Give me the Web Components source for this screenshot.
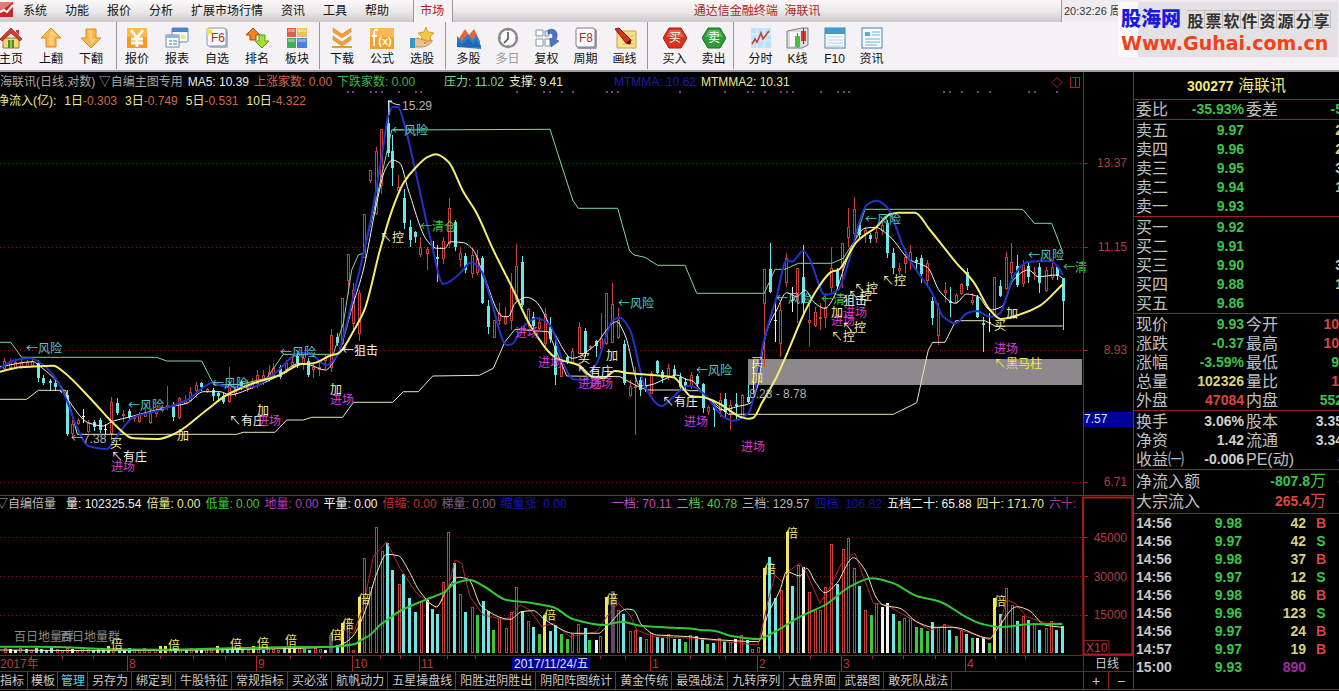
<!DOCTYPE html>
<html lang="zh-CN">
<head>
<meta charset="utf-8">
<title>通达信金融终端 海联讯</title>
<style>
html,body{margin:0;background:#000;font:12px/16px "Liberation Sans","Noto Sans CJK SC",sans-serif}
</style>
</head>
<body>
<trade-terminal></trade-terminal>
<script>
const BASE = `*{box-sizing:border-box}button{font:inherit;color:inherit;background:none;border:0;padding:0;margin:0;white-space:nowrap;cursor:default}`;
function define(name, html, setup){
  const t = document.createElement('template');
  customElements.define(name, class extends HTMLElement{
    connectedCallback(){
      if(this.shadowRoot) return;
      t.innerHTML = `<style>${BASE}</style>` + (typeof html === 'function' ? html(this) : html);
      this.attachShadow({mode:'open'}).append(t.content.cloneNode(true));
      if(setup) setup(this.shadowRoot, this);
    }
  });
}

/* ---------- toolbar icons, 24 x 22 ---------- */
const ICONS = {
home:`<path d="M4 11h16v10H4z" fill="#f7d873" stroke="#9a7a2a"/><path d="M12 1L1 12l2 2 9-8 9 8 2-2z" fill="#d63a2a" stroke="#8c1a12" stroke-width=".7"/><path d="M17 3h3v5l-3-3z" fill="#c33"/><rect x="9" y="13" width="6" height="8" fill="#4a8c2a"/><path d="M12 13v8" stroke="#cf8"/>`,
up:`<path d="M12 1L22 11h-5v9H7v-9H2z" fill="#fdb64c" stroke="#d88a24"/><path d="M12 3l6 6h-3v9H10V9" fill="#ffd68c" opacity=".7"/>`,
down:`<path d="M12 21L2 11h5V2h10v9h5z" fill="#fdb64c" stroke="#d88a24"/><path d="M9 3h4v9h4l-5 6" fill="#ffd68c" opacity=".7"/>`,
yen:`<rect x="2" y="1" width="20" height="20" fill="#f59a22"/><rect x="2" y="1" width="20" height="9" fill="#ffb84a"/><path d="M6 3l6 8 6-8M12 11v9M6 12h12M6 16h12" fill="none" stroke="#fff" stroke-width="2.8"/>`,
sheet:`<rect x="7" y="1" width="16" height="14" rx="1" fill="#f4f9ff" stroke="#6a8ab8"/><path d="M7 1h16v4H7z" fill="#4b82cc"/><rect x="1" y="8" width="13" height="12" fill="#fff" stroke="#7a8aa0"/><path d="M1 8h13v3H1z" fill="#8fb4de"/><path d="M16 8h4v4h-4z" fill="#f6e27a"/><path d="M4 14h3m1 0h4M4 17h3m1 0h4" stroke="#7aa6d6" stroke-width="1.5"/>`,
f6:`<rect x="4" y="2" width="19" height="19" rx="2" fill="#a9b8cc"/><rect x="2" y="1" width="19" height="18" rx="2" fill="#f6faff" stroke="#7d98bc"/><path d="M1 1l5 2 2-3-1 5 3 2H5L2 9V5z" fill="#ffe23a"/><text x="13" y="15" font-size="12" text-anchor="middle" fill="#c22">F6</text>`,
rank:`<path d="M8 1l7 7h-4v5H5V8H1z" fill="#f2831f" stroke="#a84c10"/><path d="M17 21l-7-7h4V8h6v6h4z" fill="#a4e030" stroke="#5a9a18"/>`,
blocks:`<path d="M2 1h9v9H2z" fill="#e8584a"/><path d="M12 1h10v9H12z" fill="#eec25a"/><path d="M2 11h9v10H2z" fill="#3fae58"/><path d="M12 11h10v10H12z" fill="#4d7fdc"/><path d="M3 2h7v3H3zM13 2h8v3h-8zM3 12h7v3H3zM13 12h8v3h-8z" fill="#fff" opacity=".35"/>`,
dl:`<path d="M3 1l9 6 9-6v4l-9 6-9-6zM3 9l9 6 9-6v4l-9 6-9-6z" fill="#eda234" stroke="#d18418" stroke-width=".5"/><path d="M2 19h20v2H2z" fill="#e39a38"/>`,
fx:`<rect x="0" y="1" width="24" height="21" fill="#f5a02c"/><rect x="0" y="1" width="24" height="9" fill="#fbb750"/><path d="M8 3c-3-1-4 1-4 3v13M2 9h5" fill="none" stroke="#fff" stroke-width="1.8"/><text x="15" y="18" font-size="11" font-weight="bold" text-anchor="middle" fill="#fff">(x)</text>`,
pick:`<path d="M16 0l2 5 6 1-4 4 1 5-5-2-5 2 1-5-4-4 6-1z" fill="#f7c83c" stroke="#b98a1c" stroke-width=".7"/><path d="M4 13c4-4 7 0 10 0 3 0 3 3 0 3 4-1 6-3 8-3 1 2-5 7-10 7H4z" fill="#f2c08a" stroke="#b07a3c" stroke-width=".8"/><path d="M0 11h5v10H0z" fill="#2e9bc0"/>`,
peaks:`<path d="M1 13L8 2l4 6 5-6 6 12v6H1z" fill="#f0642c"/><path d="M0 20V9l5 5 6-7 5 6 3-6 5 12v3z" fill="#2f7fd0"/><path d="M0 20v-6l5 3 6-6 5 6 3-4 5 7z" fill="#155aa8" opacity=".6"/>`,
clock:`<circle cx="12" cy="11" r="9" fill="#fafafa" stroke="#8a8a8a" stroke-width="2.4"/><path d="M12 5v7l-4 4" fill="none" stroke="#444" stroke-width="1.5"/><path d="M12 3v1M12 18v1M4 11h1M19 11h1" stroke="#555"/>`,
adj:`<path d="M1 3h7v6H1zM1 12h7v7H1zM10 12h5v7h-5z" fill="#fff" stroke="#7f95ae"/><path d="M10 4h4v5h-4z" fill="#d9e6f4" stroke="#7f95ae"/><path d="M13 3c8-3 11 4 8 10l3 1-8 6-1-9 2 1c2-4 0-7-4-5z" fill="#4b74c8" stroke="#2c4d96" stroke-width=".6"/>`,
f8:`<rect x="3" y="2" width="20" height="20" rx="2" fill="#9a9aa8"/><rect x="2" y="1" width="19" height="19" rx="2" fill="#fcfcff" stroke="#777d90"/><text x="12" y="15" font-size="12" text-anchor="middle" fill="#c22">F8</text>`,
draw:`<path d="M4 4h19v17H4z" fill="#fbe28a" stroke="#c9a040"/><path d="M9 9h12M9 13h12M9 17h12" stroke="#d8b858"/><path d="M2 2l4-1 12 12-1 4-4-1z" fill="#d8321e" stroke="#7e160c"/><path d="M17 17l-4-1 4-3z" fill="#222"/>`,
buy:`<path d="M6 1h12l6 10-6 10H6L0 11z" fill="#d8321e" stroke="#a81c10"/><path d="M7 3h10l4 7H3z" fill="#f0705a" opacity=".7"/><text x="12" y="15" font-size="12" text-anchor="middle" fill="#fff">买</text>`,
sell:`<path d="M6 1h12l6 10-6 10H6L0 11z" fill="#2f9a38" stroke="#1a6e22"/><path d="M7 3h10l4 7H3z" fill="#6cc46c" opacity=".7"/><text x="12" y="15" font-size="12" text-anchor="middle" fill="#fff">卖</text>`,
tick:`<rect x="2" y="1" width="20" height="20" fill="#bfe2f8"/><path d="M2 7h20M2 13h20M8 1v20M15 1v20" stroke="#e4f4ff"/><path d="M3 17l3-5 2 3 4-9 2 6 3-4 3-4" fill="none" stroke="#c83c3c" stroke-width="1.6"/>`,
kline:`<path d="M1 4l15-3h6v17l-6 3H1z" fill="#dcdce2" stroke="#7c7c88"/><path d="M4 5h10v14H4z" fill="#fff"/><path d="M11.500 6v15" stroke="#2a8a2a"/><path d="M9 9h5v11H9z" fill="#4cc03c"/><path d="M15 4h5v10h-5z" fill="#e03838"/><path d="M17.500 1v16" stroke="#a02020"/>`,
f10:`<rect x="2" y="1" width="20" height="20" fill="#fff" stroke="#3b84b4"/><path d="M2 1h20v6H2z" fill="#3f9ccc"/><path d="M4 10h16M4 13h16M4 16h16M4 19h16" stroke="#a6cfe4"/>`,
news:`<rect x="2" y="1" width="20" height="20" fill="#f7fcff" stroke="#3b84b4"/><path d="M5 5h5v4H5z" fill="#5fa9d4"/><path d="M12 5h8M12 8h8M5 12h15M5 15h15M5 18h12" stroke="#6cb0d8"/>`};

define('tool-button', el=>`<style>
:host{display:block;flex:none;width:var(--tool-w,40px)}
button{display:flex;flex-direction:column;align-items:center;gap:2px;width:100%;padding-top:5px;color:#111}
:host([off]) button{color:#999}
svg{display:block;width:24px;height:22px}
</style><button type="button"><svg viewBox="0 0 24 22" font-family="Liberation Sans,Noto Sans CJK SC,sans-serif">${ICONS[el.getAttribute('icon')]}</svg><slot></slot></button>`);

define('menu-bar', `<style>
:host{display:flex;align-items:stretch;height:22px;overflow:hidden;color:#111;background:linear-gradient(#fbf9f9,#e9e7e7 55%,#cbc9ca)}
svg{width:14px;height:18px;flex:none}
nav{display:flex;gap:18px;padding:0 24px 0 9px}
.on{padding:0 8px 0 6px;border:solid #999;border-width:0 1px;background:#f5f3f3;color:#b82020}
h1{margin:0 auto;font:inherit;line-height:22px;color:#b02222;white-space:pre}
time{flex:0 0 278px;border-left:1px solid #999;padding-left:2px;font-size:11px;line-height:22px;background:#efedef;color:#333}
</style>
<svg viewBox="0 0 14 18"><path d="M0 2h13v15H0z" fill="#c8262a"/><path d="M0 2h13L0 12z" fill="#e87878"/><path d="M0 12l4-2 3 2 6-7" stroke="#fff" stroke-width="2" fill="none"/></svg>
<nav><button>系统</button><button>功能</button><button>报价</button><button>分析</button><button>扩展市场行情</button><button>资讯</button><button>工具</button><button>帮助</button></nav>
<button class="on">市场</button><h1>通达信金融终端  海联讯</h1><time>20:32:26 周</time>`);

define('tool-bar', `<style>
:host{display:flex;height:50px;overflow:hidden;background:#f5f2f5;border-bottom:2px solid #9c9a9c;padding-bottom:1px}
div{display:flex;flex:none}
div+div{border-left:1px solid #9a989a;background:none}
.a{margin-left:-9px;padding-right:5px}.b{padding-right:2px}.c{padding:0 3px 0 2px}
.d{--tool-w:39px;padding:0 3px}.e{--tool-w:39px;padding-left:7px}.f{--tool-w:37px;padding-left:8px}
</style>
<div class="a"><tool-button icon="home">主页</tool-button><tool-button icon="up">上翻</tool-button><tool-button icon="down">下翻</tool-button></div>
<div class="b"><tool-button icon="yen">报价</tool-button><tool-button icon="sheet">报表</tool-button><tool-button icon="f6">自选</tool-button><tool-button icon="rank">排名</tool-button><tool-button icon="blocks">板块</tool-button></div>
<div class="c"><tool-button icon="dl">下载</tool-button><tool-button icon="fx">公式</tool-button><tool-button icon="pick">选股</tool-button></div>
<div class="d"><tool-button icon="peaks">多股</tool-button><tool-button icon="clock" off>多日</tool-button><tool-button icon="adj">复权</tool-button><tool-button icon="f8">周期</tool-button><tool-button icon="draw">画线</tool-button></div>
<div class="e"><tool-button icon="buy">买入</tool-button><tool-button icon="sell">卖出</tool-button></div>
<div class="f"><tool-button icon="tick">分时</tool-button><tool-button icon="kline">K线</tool-button><tool-button icon="f10">F10</tool-button><tool-button icon="news">资讯</tool-button></div>`);

define('brand-badge', `<style>
:host{display:block;width:220px;height:55px;padding:5px 0 0 3px;background:linear-gradient(90deg,#fbf9fb 20px,#e3e1e3 20px);overflow:hidden;white-space:nowrap}
.t{display:flex;align-items:center;gap:6px;height:24px}
b{font-size:20px;line-height:24px;color:#1a1ae0;font-weight:900}
.g{display:flex;color:#333;font:bold 16px/18px "Noto Sans CJK SC",sans-serif}
.g i{font-style:normal;width:18px;height:18px;text-align:center;border:1px solid #c4beb6;border-left-width:0}
a{display:block;font:bold 19px/24px "DejaVu Sans",sans-serif;color:#f2421a;text-decoration:none}
</style><div class="t"><b>股海网</b><span class="g"><i>股</i><i>票</i><i>软</i><i>件</i><i>资</i><i>源</i><i>分</i><i>享</i></span></div><a href="#">Www.Guhai.com.cn</a>`);

define('legend-row', `<style>
:host{display:flex;gap:5px;height:19px;line-height:19px;overflow:hidden;white-space:pre}
::slotted(span){flex:none}
</style><slot></slot>`);

/* ---------- chart data ----------
   Points are kept per tile, in thirds of a pixel from the tile's origin. */
const TILE={A:[0,330],B:[330,90],C:[690,180],P:[0,490],Q:[340,490],R:[700,490]};
const px=(t,x,y)=>[TILE[t][0]+x/3,TILE[t][1]+y/3];
const pts=parts=>Object.entries(parts).flatMap(([t,s])=>s.trim().split(/\s+/).map(p=>px(t,...p.split(',').map(Number))));
const line=(color,w,parts)=>`<polyline points="${pts(parts).map(p=>p.map(v=>v.toFixed(1)).join()).join(' ')}" fill="none" stroke="${color}" stroke-width="${w}" stroke-linejoin="round"/>`;
/* monotone cubic through the points, so an average never overshoots its own data */
function curve(color,w,parts){
  const P=pts(parts),n=P.length,d=[],m=[];
  for(let i=0;i<n-1;i++) d.push((P[i+1][1]-P[i][1])/Math.max(.1,P[i+1][0]-P[i][0]));
  m[0]=d[0];m[n-1]=d[n-2];
  for(let i=1;i<n-1;i++) m[i]=d[i-1]*d[i]<=0?0:2*d[i-1]*d[i]/(d[i-1]+d[i]);
  let s=`M${P[0].map(v=>v.toFixed(1))}`;
  for(let i=0;i<n-1;i++){const h=(P[i+1][0]-P[i][0])/3;s+=`C${[P[i][0]+h,P[i][1]+m[i]*h,P[i+1][0]-h,P[i+1][1]-m[i+1]*h,...P[i+1]].map(v=>v.toFixed(1))}`}
  return `<path d="${s}" fill="none" stroke="${color}" stroke-width="${w}"/>`;
}
const COL={r:'#c8403c',c:'#6ee6e6',w:'#f4f4ee',g:'#3cc83c',y:'#f4e65a',p:'#5c4a64'};
/* colour, x, high, body top, body bottom, low */
const CANDLES={
A:`r12,85,92,115,122 r30,88,95,112,120 r46,88,95,110,118 r62,90,96,108,116 r80,90,96,108,114 r97,88,94,106,112 c115,90,98,145,155 c130,135,145,160,165 c149,148,152,160,182 c166,150,158,172,182 c182,178,182,186,190 c200,180,195,312,318 r215,270,282,308,325 r233,265,270,280,285 w250,237,258,262,280 r265,270,278,302,308 c283,270,275,290,302 c301,265,270,300,308 w316,282,296,300,312 r334,200,215,308,330 c350,205,220,250,255 r368,240,252,256,275 c386,238,243,262,272 r402,255,260,265,275 r418,245,252,272,280 r435,235,245,258,262 r451,240,250,275,282 r468,235,242,250,260 r486,225,232,240,245 r502,168,225,232,240 c520,215,230,262,272 r536,200,205,262,268 r554,195,210,218,222 r571,170,185,210,215 r588,155,165,180,205 c604,155,160,172,182 r620,175,178,182,188 c638,175,180,198,212 c655,185,190,198,215 c670,190,197,215,222 r688,112,165,212,220 r705,170,178,190,200 c722,150,155,172,180 r740,150,158,175,185 r756,145,155,170,178 r772,120,135,160,175 r790,120,135,150,165 r806,105,125,140,155 r820,100,115,135,145 c840,105,110,140,148 r858,90,100,118,130 r875,85,95,105,115 c892,70,78,98,115 r910,75,85,100,120 c925,85,92,135,142 r940,100,112,116,145 r958,90,112,116,138 r975,75,80,90,118`,
B:`r3,718,735,830,845 c20,730,742,758,768 r37,625,625,760,765 r53,492,492,570,615 r70,580,600,700,720 r86,600,610,730,752 r103,373,373,500,505 r121,240,240,270,280 r137,172,182,370,375 r154,118,118,285,312 c173,30,100,190,200 c187,135,183,235,288 r205,255,290,300,312 c221,298,323,400,418 c239,390,410,450,470 c256,422,427,440,460 r271,440,472,492,502 r290,470,478,490,540 w308,452,470,473,490 c322,465,500,506,575 r340,440,453,505,522 r356,325,353,460,475 c374,390,395,470,482 r391,470,488,508,530 c406,490,497,540,550 r425,475,495,550,565 r442,480,505,545,555 c457,498,505,638,642 c475,630,648,712,732 r491,690,690,740,742 r508,640,670,690,705 r526,650,678,698,705 r542,550,590,690,720 r559,462,528,628,635 c577,497,515,645,650 r593,655,658,700,710 c610,665,680,708,718 r628,680,695,715,720 r644,655,672,760,780 c661,680,710,748,760 c676,740,768,855,885 r694,810,820,858,862 c712,795,800,815,822 r727,775,783,815,822 r746,695,712,788,792 c764,715,723,790,800 r779,765,768,772,780 c797,750,753,768,800 r812,668,745,775,780 r829,608,608,760,765 r847,578,643,755,760 r863,655,690,740,748 c881,750,762,880,885 r899,870,888,915,922 r914,830,888,892,1035 c931,860,870,900,918 c946,865,888,895,905 r964,842,848,908,912 c982,810,812,848,852 c997,840,845,865,880 r1015,822,835,860,870 c1033,825,838,855,862 c1050,850,860,890,900 c1066,865,875,890,900`,
C:`r4,575,585,618,628 c20,582,588,612,620 c38,610,613,683,700 r53,675,680,693,705 c71,675,680,690,740 r89,640,660,690,710 c104,640,658,695,710 r121,660,675,700,750 c137,640,672,678,718 r155,642,645,708,712 c173,615,650,665,668 w190,540,560,563,640 r223,268,268,370,560 c239,188,268,335,340 w256,370,420,423,485 r271,370,390,488,530 r289,220,235,305,320 w306,320,360,363,395 r322,265,265,360,430 c340,195,290,370,405 r358,360,420,425,500 r374,380,395,435,440 r391,370,410,415,450 r406,340,380,410,445 r424,200,265,320,340 c442,265,270,318,325 r457,190,190,260,325 r475,85,140,170,200 r493,52,87,160,190 c508,130,135,165,175 r526,140,150,160,190 c541,160,165,178,188 r559,140,155,175,188 r577,120,135,150,165 c592,120,130,218,235 c610,205,218,265,282 r628,250,265,270,285 r645,205,230,250,280 r661,195,215,240,270 c679,230,240,245,270 c694,225,235,283,310 r712,240,250,300,320 c727,350,362,415,435 r745,370,385,465,495 r764,305,330,335,365 c779,320,362,370,410 r797,340,345,365,370 r814,310,312,340,345 c830,265,275,318,330 r847,340,360,365,375 c862,345,350,410,415 c880,410,430,436,515 w898,400,425,428,455 r913,290,292,405,412 c931,300,318,348,350 r949,215,230,325,330 r964,190,245,275,300 c982,225,258,315,322 r998,240,255,310,320 c1015,250,258,290,310 r1033,260,275,280,300 c1048,250,262,310,340 r1067,262,270,330,335 r1085,240,260,290,300 c1100,255,262,288,300 c1118,293,293,362,450`};
function candles(){
  let out='';
  for(const t in CANDLES) for(const s of CANDLES[t].split(' ')){
    const k=s[0],[x,hi,bt,bb,lo]=s.slice(1).split(',').map(Number),[ox,oy]=TILE[t];
    const X=Math.round(ox+x/3),Y=v=>Math.round(oy+v/3),h=Math.max(1,Y(bb)-Y(bt));
    if(k==='r') out+=`<path d="M${X+.5} ${Y(hi)}V${Y(bt)}M${X+.5} ${Y(bb)}V${Y(lo)}" stroke="${COL.r}"/><rect x="${X-.5}" y="${Y(bt)+.5}" width="2" height="${h}" fill="#000" stroke="${COL.r}"/>`;
    else out+=`<path d="M${X+.5} ${Y(hi)}V${Y(lo)}" stroke="${COL[k]}"/><rect x="${X-1}" y="${Y(bt)}" width="3" height="${h}" fill="${COL[k]}"/>`;
  }
  return out;
}
const VOLUME={
P:`p990,435 c1010,465 y1027,400 r1043,385 r1060,480 y1076,320 r1092,205 r1110,290 r1127,112 r1145,182 c1162,160 c1177,240 r1196,283`,
Q:`c190,253 c208,323 c226,367 r242,335 w260,330 c277,357 c292,372 r310,277 r325,127 c343,220 r361,312 c376,367 r396,352 g412,375 c428,333 c445,362 g460,420 r478,385 r497,415 r512,365 r529,290 c547,362 r563,393 c580,410 g598,433 y613,375 c631,423 c646,405 g664,432 g682,447 r697,433 r715,403 c734,413 g748,450 w767,450 r781,437 y799,320 p817,303 r833,360 c850,372 r869,423 r884,421 c901,440 r917,448 r934,430 c952,440 c967,445 r985,433 c1003,447 c1018,447 g1036,457 r1051,435 c1069,438`,
R:`c7,445 g22,462 c40,458 r58,445 c73,455 r91,455 w106,447 r124,435 c142,450 r157,478 r175,470 y193,235 c208,200 c226,323 r243,300 y260,125 c277,288 r293,225 w310,232 r328,305 r345,358 r361,360 r376,290 r394,163 c412,283 r428,178 r445,145 r463,233 c478,288 r496,360 g512,375 r529,340 w547,350 w562,338 c580,372 g598,392 r613,385 r631,385 g649,412 g664,415 g682,422 c697,395 r715,412 r733,403 c748,420 g767,437 r784,420 c799,432 g817,445 w832,443 w850,445 g868,460 y883,325 c901,372 r919,295 r935,345 c952,392 r969,378 c985,390 r1003,400 c1018,420 r1037,415 r1053,393 c1069,420 c1087,408`};
/* quiet period before the breakout: one letter per session */
const QUIET='rwwrcrccccrrrwrrrcccyrcwcrrrrryyrcrcrcwrrygcccgryrcrrrcyyrgcrrw';
function volumes(){
  let out='';
  const bar=(k,X,Y)=>out+=k==='r'?`<rect x="${X-.5}" y="${Y+.5}" width="2" height="${652-Y}" fill="#000" stroke="${COL.r}"/>`:`<rect x="${X-1}" y="${Y}" width="${k==='p'?4:3}" height="${653-Y}" fill="${COL[k]}"/>`;
  [...QUIET].forEach((k,i)=>bar(k,Math.round(5+i*5.16),k==='y'?646:649+(i*7)%3-1));
  for(const t in VOLUME) for(const s of VOLUME[t].split(' ')){const[x,y]=s.slice(1).split(',').map(Number),p=px(t,x,y);bar(s[0],Math.round(p[0]),Math.round(p[1]))}
  return out;
}
const grid=(ys)=>ys.map(y=>`<path d="M0 ${y}.5H1083" stroke="#8c1c1c" stroke-dasharray="1 3"/><path d="M1083 ${y}.5h5" stroke="#a02020"/>`).join('');
const arrows=s=>s.replace(/[←↖]/,a=>`<tspan font-family="Noto Sans CJK SC">${a}</tspan>`);
const label=(x,y,s,fill,a='start')=>`<text x="${x}" y="${y+4}" fill="${fill}" text-anchor="${a}">${arrows(s)}</text>`;
const marks=(color,list)=>list.map(([x,y,s])=>label(x,y,s,color)).join('');

define('price-pane', ()=>`<style>
:host{display:grid;border-bottom:0}
svg,.head{grid-area:1/1;min-width:0}
svg{display:block;width:100%;height:auto}
.head{position:relative;max-width:calc(100% - 84px);height:40px;padding-top:1px;overflow:hidden}
.gap{margin-left:24px}.wide{margin-left:46px}
.flow{gap:8px;margin-left:-3px}
</style>
<svg viewBox="0 72 1133 424" font-family="Liberation Sans,Noto Sans CJK SC,sans-serif" font-size="12">
${grid([163,247,350,482])}
<rect x="748" y="359" width="334" height="26" fill="#8c888c"/>
${[347,352,370,375,381,398,415,420,516,543,549,561,572,606,611,617,679,724,747,752,764,780,786,792,820,837,843,848,943,949,961,977,989,1028,1034,1056].map(x=>`<rect x="${x}" y="91" width="2" height="2" fill="#8a3a8a"/>`).join('')}
${candles()}
${line('#7fd8a0',1,{A:'0,37 32,37 65,82 470,82 500,93 605,93 642,165 720,163 800,145 850,73 990,73',B:'10,793 40,700 65,540 85,495 100,490 130,370 185,120 660,118 728,330 745,355 863,355 898,480 912,495 945,502 983,526 1065,526 1100,610',C:'20,340 223,340 255,268 285,268 325,250 425,250 460,235 495,180 525,88 998,88 1033,130 1085,130 1118,215'})}
${line('#e8e8c0',1,{A:'0,208 80,208 115,181 197,181 232,313 710,313 730,307 825,307 860,270 910,270 935,262',B:'38,982 70,937 188,937 220,905 265,905 308,858 448,856 490,835 525,755 555,718 655,725 710,858 870,860 915,885 950,900 1070,900',C:'0,632 28,632 115,703 610,703 680,668 715,510 728,487 765,487 797,422 885,422 915,438 1118,438'})}
${curve('#f4f4f4',1,{A:'0,110 100,95 115,105 180,165 205,210 265,278 310,288 335,275 400,258 500,232 560,220 610,185 660,185 690,195 740,180 830,140 900,100 930,105 975,120',B:'20,800 70,640 100,540 140,340 165,240 187,210 210,220 235,300 290,450 320,475 345,475 360,455 400,458 430,480 455,540 520,680 535,680 555,640 590,622 615,632 670,725 727,805 790,770 860,695 885,735 930,888 960,885 1010,865 1040,855 1075,870',C:'0,600 40,640 100,690 140,680 180,670 205,610 220,500 235,440 260,390 290,338 320,350 345,330 370,365 405,385 430,355 460,270 490,190 525,145 555,142 600,170 660,240 712,262 750,335 797,370 830,342 865,350 900,390 935,380 970,300 1015,270 1045,290 1100,285 1118,295'})}
${curve('#2234c8',2,{A:'0,115 40,92 90,85 130,105 170,150 200,210 230,290 265,348 320,357 350,320 400,262 480,240 560,210 640,158 680,172 760,170 830,125 900,68 930,72 980,105',B:'20,800 40,740 70,620 120,400 160,170 175,75 190,50 205,52 225,110 260,260 300,440 340,582 385,555 425,517 455,545 480,620 530,765 545,763 580,710 620,685 660,705 700,820 730,868 760,870 800,820 850,690 870,683 900,720 945,890 995,948 1030,920 1070,888',C:'0,617 40,640 100,710 130,722 175,700 200,610 220,490 260,350 290,240 305,245 340,213 360,240 405,345 445,330 470,265 510,120 530,75 560,62 590,80 640,200 665,250 727,340 760,410 797,430 830,400 860,393 900,410 930,400 970,290 1015,245 1080,243 1105,262 1118,285'})}
${curve('#f6ee6c',2,{A:'0,125 60,112 160,107 190,125 280,215 340,280 400,325 475,327 530,308 620,240 680,195 760,160 840,135 905,102 940,100',B:'0,797 25,790 75,715 105,655 150,480 190,350 220,280 255,235 295,200 318,193 355,215 400,305 440,370 490,480 550,600 600,705 680,805 745,825 790,862 820,865 855,843 900,850 1030,862 1070,908',C:'0,648 40,652 90,672 150,710 175,716 190,713 215,670 260,590 300,500 340,405 380,330 425,275 445,270 500,185 560,140 600,103 625,98 675,98 720,150 800,250 850,305 900,390 932,417 1000,400 1050,377 1118,313'})}
${marks('#58c8cc',[[26,349,'←风险'],[128,406,'←风险'],[212,384,'←风险'],[280,353,'←风险'],[392,131,'←风险'],[618,304,'←风险'],[696,371,'←风险'],[776,299,'←风险'],[865,220,'←风险'],[1028,256,'←风险']])}
${marks('#3cc83c',[[420,227,'←清仓'],[821,300,'←清']])}
<svg x="1063" y="258" width="19" height="20"><text x="0" y="14" fill="#3cc83c">${arrows('←清')}</text></svg>
${marks('#f2f2f2',[[342,351,'←狙击'],[843,301,'狙击'],[111,457,'↖有庄'],[229,421,'↖有庄'],[577,372,'↖有庄'],[662,402,'↖有庄']])}
${marks('#d83cd8',[[111,467,'进场'],[257,421,'进场'],[330,400,'进场'],[515,333,'进场'],[538,363,'进场'],[578,384,'进场'],[589,384,'进场'],[684,422,'进场'],[741,447,'进场'],[831,321,'进场'],[843,313,'进场'],[994,349,'进场']])}
${marks('#f4ecaa',[[110,444,'买'],[578,359,'买'],[994,326,'买'],[177,436,'加'],[257,411,'加'],[330,390,'加'],[606,356,'加'],[831,313,'加'],[1006,314,'加'],[380,238,'↖控'],[848,296,'↖控'],[854,289,'↖控'],[882,281,'↖控'],[842,328,'↖控'],[831,337,'↖控']])}
${marks('#f4ec3c',[[751,363,'买'],[751,378,'加'],[994,364,'↖黑马柱']])}
${marks('#b4b4b4',[[71,439,'←7.38'],[402,106,'15.29'],[749,394,'8.28 - 8.78']])}
<path d="M389 115v-14h3l-3 1M389 101l6 3 5 1" fill="none" stroke="#ddd"/>
<path d="M1083.5 72V496M0 495.5H1134" stroke="#a02020" fill="none"/>
<path d="M1052 82.5l5-5 5 5-5 5zM1070.5 77.5h9v10h-9zM1075.5 77.5v10" stroke="#a02828" fill="none"/>
${label(1127,163,'13.37','#b83c3c','end')}${label(1127,247,'11.15','#b83c3c','end')}${label(1127,350,'8.93','#b83c3c','end')}${label(1127,482,'6.71','#b83c3c','end')}
<rect x="1084" y="412" width="49" height="15" fill="#000096"/>${label(1084,419,'7.57','#e4e4f4')}
</svg>
<div class="head">
<legend-row><span style="color:#aaa">海联讯(日线.对数) ▽自编主图专用</span><span style="color:#eee">MA5: 10.39</span><span style="color:#d0684c">上涨家数: 0.00</span><span style="color:#3cb84c">下跌家数: 0.00</span><span class="gap" style="color:#7fd890">压力: 11.02</span><span style="color:#eeeed0">支撑: 9.41</span><span class="wide" style="color:#1c1cb4">MTMMA: 10.62</span><span style="color:#ecec94">MTMMA2: 10.31</span></legend-row>
<legend-row class="flow"><span style="color:#ecec94">净流入(亿):</span><span style="color:#ecec94">1日<font color="#d0684c">-0.303</font></span><span style="color:#ecec94">3日<font color="#d0684c">-0.749</font></span><span style="color:#ecec94">5日<font color="#d0684c">-0.531</font></span><span style="color:#ecec94">10日<font color="#d0684c">-4.322</font></span></legend-row>
</div>`);

define('volume-pane', ()=>`<style>
:host{display:grid}
svg,.head{grid-area:1/1;min-width:0}
svg{display:block;width:100%;height:auto}
.head{position:relative;max-width:calc(100% - 52px);height:18px;overflow:hidden}
.wide{margin-left:40px}
legend-row{height:17px;line-height:17px}
</style>
<svg viewBox="0 496 1133 176" font-family="Liberation Sans,Noto Sans CJK SC,sans-serif" font-size="12">
${grid([537,576,615])}
${label(14,637,'百日地量群','#8a8a8a')}${label(60,637,'百日地量群','#8a8a8a')}
${volumes()}
${line('#b82828',1,{P:'1030,420 1060,430 1090,350 1120,200 1160,155',Q:'180,235 230,310 290,355 325,290 345,210 365,220 390,320 430,375 500,390 540,345 570,360 605,410 640,400 690,440 770,425 800,380 835,340 870,375 890,420 940,440 1060,445',R:'175,465 205,330 225,255 245,275 270,240 300,220 320,250 360,340 390,290 430,210 465,190 490,260 520,340 560,345 630,385 690,420 740,405 870,450 900,400 920,330 945,340 980,380 1040,400 1087,400'})}
${curve('#f0e8b8',1,{P:'0,480 330,482 900,475 1000,470 1040,455 1065,430 1100,350 1130,250 1160,193',Q:'175,197 205,240 240,305 290,350 320,300 355,262 385,268 425,350 510,388 545,365 580,362 610,385 640,405 700,430 775,430 800,410 860,357 880,360 905,405 950,435 1050,440',R:'0,445 100,452 175,455 205,370 240,300 260,245 300,258 320,235 345,275 375,308 410,280 460,203 495,240 530,325 550,345 600,355 650,395 700,412 760,412 870,445 890,420 950,350 985,360 1035,405 1087,412'})}
${curve('#34c834',2,{P:'0,470 115,470 230,473 330,478 480,479 690,475 900,471 1000,470 1065,462 1080,452 1110,435 1140,405 1175,380',Q:'180,363 260,328 310,308 345,280 390,270 430,288 500,330 560,337 640,352 700,388 790,405 845,395 900,407 1000,413 1070,418',R:'0,420 40,422 90,437 175,447 230,422 300,380 380,342 450,290 515,265 580,280 650,318 720,335 800,382 850,403 900,411 990,403 1087,402'})}
${marks('#f2e86a',[[111,645],[168,646],[230,645],[257,644],[285,641],[330,636],[342,625],[358,600],[544,616],[606,600],[764,570],[786,534],[994,602]].map(([x,y])=>[x,y,'倍']))}
<path d="M1083 497.5h49.5v157h-49z" fill="none" stroke="#a81c1c" stroke-width="2"/>
<path d="M0 655.5H1134M0 671.5H1134M1083.5 655V672M1084 640.5h25v14" stroke="#8c1c1c" fill="none"/>
<path d="${[127,256,352,419,650,757,841,965].map(x=>`M${x}.5 656v15`).join('')}${[31,62,93,160,193,225,290,320,380,400,447,475,600,625,690,725,779,810,872,903,935,995,1025].map(x=>`M${x}.5 656v3`).join('')}" stroke="#a82828"/>
${marks('#b83c3c',[[0,664,'2017年'],[129,664,'8'],[258,664,'9'],[354,664,'10'],[421,664,'11'],[652,664,'1'],[759,664,'2'],[843,664,'3'],[967,664,'4'],[1086,648,'X10']])}
<rect x="512" y="657" width="78" height="13" fill="#00009a"/>${label(514,664,'2017/11/24/五','#e4e4f4')}
${label(1127,538,'45000','#b83c3c','end')}${label(1127,577,'30000','#b83c3c','end')}${label(1127,615,'15000','#b83c3c','end')}
${label(1095,664,'日线','#c8c8c8')}
</svg>
<div class="head"><legend-row><span style="color:#bbb;margin-left:-4px;margin-right:5px">▽自编倍量</span><span style="color:#eee">量: 102325.54</span><span style="color:#ecec94">倍量: 0.00</span><span style="color:#3cc83c">低量: 0.00</span><span style="color:#b43cb4">地量: 0.00</span><span style="color:#f4f4f4">平量: 0.00</span><span style="color:#c03030">倍缩: 0.00</span><span style="color:#7c6484">梯量: 0.00</span><span style="color:#1818b4">缩量涨: 0.00</span><span class="wide" style="color:#c84cc8">一档: 70.11</span><span style="color:#4cd04c">二档: 40.78</span><span style="color:#bbb">三档: 129.57</span><span style="color:#1414a0">四档: 106.82</span><span style="color:#f4f4f4">五档二十: 65.88</span><span style="color:#ecec94">四十: 171.70</span><span style="color:#a43ca4">六十:</span></legend-row></div>`);

define('template-tabs', `<style>
:host{display:flex;height:18px;border-bottom:1px solid #a02020;color:#c8c8c8;overflow:hidden}
nav{display:flex;flex:1;min-width:0;overflow:hidden}
nav button{flex:none;padding:0 3px 0 4px;border-right:1px solid #a02020}
nav .s{padding:0 2px 0 3px}nav .f{padding:0 3px 0 0}
nav .on{color:#4cd8e8}
div{display:flex;flex:0 0 50px;border-left:1px solid #a02020}
div button{flex:1;font-size:14px}div button+button{border-left:1px solid #a02020}
</style><nav><button class="f">指标</button><button class="s">模板</button><button class="s on">管理</button><button>另存为</button><button>绑定到</button><button>牛股特征</button><button>常规指标</button><button>买必涨</button><button>航帆动力</button><button>五星操盘线</button><button>阳胜进阴胜出</button><button>阴阳阵图统计</button><button>黄金传统</button><button>最强战法</button><button>九转序列</button><button>大盘界面</button><button>武器图</button><button>敢死队战法</button></nav><div><button aria-label="放大">+</button><button aria-label="缩小">−</button></div>`);

/* ---------- quote panel: label, value, label, value; first letter = colour ---------- */
const Q=[
 [['委比','g-35.93%','委差','g-5']],
 [['卖五','g9.97','','y2'],['卖四','g9.96','','y2'],['卖三','g9.95','','w3'],['卖二','g9.94','','y1'],['卖一','g9.93','','w']],
 [['买一','g9.92','','w'],['买二','g9.91','','w'],['买三','g9.90','','w3'],['买四','g9.88','','y1'],['买五','g9.86','','w']],
 [['现价','g9.93','今开','r10.'],['涨跌','g-0.37','最高','r10.'],['涨幅','g-3.59%','最低','g9.'],['总量','y102326','量比','r1.'],['外盘','r47084','内盘','g552']],
 [['换手','w3.06%','股本','w3.35'],['净资','w1.42','流通','w3.34'],['收益㈠','w-0.006','PE(动)','w-']]];
const T=[['14:56','9.98','42','B'],['14:56','9.97','42','S'],['14:56','9.98','37','B'],['14:56','9.97','12','S'],['14:56','9.98','86','B'],['14:56','9.96','123','S'],['14:56','9.97','24','B'],['14:57','9.97','19','B'],['15:00','9.93','890','']];
define('quote-panel', ()=>`<style>
:host{display:block;overflow:hidden;color:#c8c8c8;border-left:1px solid #a02020}
h2{margin:0;height:27px;line-height:28px;text-align:center;color:#f0e878;font-size:16px;font-weight:400}
h2 b,td{font-size:14px;font-weight:bold}
table{width:209px;border-collapse:separate;border-spacing:0;table-layout:fixed;border-top:1px solid #a02020;padding-top:1px}
table.tight{padding:0}
th,td{padding:0;height:19px;line-height:19px;white-space:nowrap;text-align:right}
th{font-weight:400;font-size:16px;text-align:left;padding-left:2px;color:#c0c0c0}
.g{color:#3cc44c}.r{color:#dc4444}.y{color:#d8d080}.w{color:#d0d0d0}.m{color:#a02ca8}
.fund{padding-bottom:2px}
.fund small{font-size:16px;font-weight:400}
.deal{padding:0}
.deal td{height:18px;line-height:18px}.deal td:first-child{text-align:left;padding-left:2px}.deal td:last-child{text-align:center}
</style><h2><b>300277</b> 海联讯</h2>
${Q.map((sec,i)=>`<table${i?'':' class="tight"'}><colgroup><col style="width:52px"><col style="width:58px"><col style="width:52px"><col></colgroup>${sec.map(([a,b,c,d])=>`<tr><th scope="row">${a}</th><td class="${b[0]}">${b.slice(1)}</td><th scope="row">${c}</th><td class="${d[0]}">${d.slice(1)}</td></tr>`).join('')}</table>`).join('')}
<table class="fund"><colgroup><col style="width:90px"><col style="width:102px"><col></colgroup><tr><th scope="row">净流入额</th><td class="g">-807.8<small>万</small></td><td class="g">-</td></tr><tr><th scope="row">大宗流入</th><td class="r">265.4<small>万</small></td><td></td></tr></table>
<table class="deal"><colgroup><col style="width:52px"><col style="width:56px"><col style="width:64px"><col style="width:30px"><col></colgroup>${T.map(([t,p,v,s])=>`<tr><td>${t}</td><td class="g">${p}</td><td class="${s?'y':'m'}">${v}</td><td class="${s==='B'?'r':'g'}">${s}</td></tr>`).join('')}</table>`);

define('trade-terminal', `<style>
:host{display:flex;flex-direction:column;position:relative;min-height:100vh;overflow:hidden;background:#000}
main{display:flex;align-items:stretch}
.charts{flex:1;min-width:0}
quote-panel{flex:0 0 206px;border-bottom:1px solid #a02020}
brand-badge{position:absolute;right:1px;top:2px}
</style><menu-bar></menu-bar><tool-bar></tool-bar><main><div class="charts"><price-pane></price-pane><volume-pane></volume-pane><template-tabs></template-tabs></div><quote-panel></quote-panel></main><brand-badge></brand-badge>`);
</script>
</body>
</html>
